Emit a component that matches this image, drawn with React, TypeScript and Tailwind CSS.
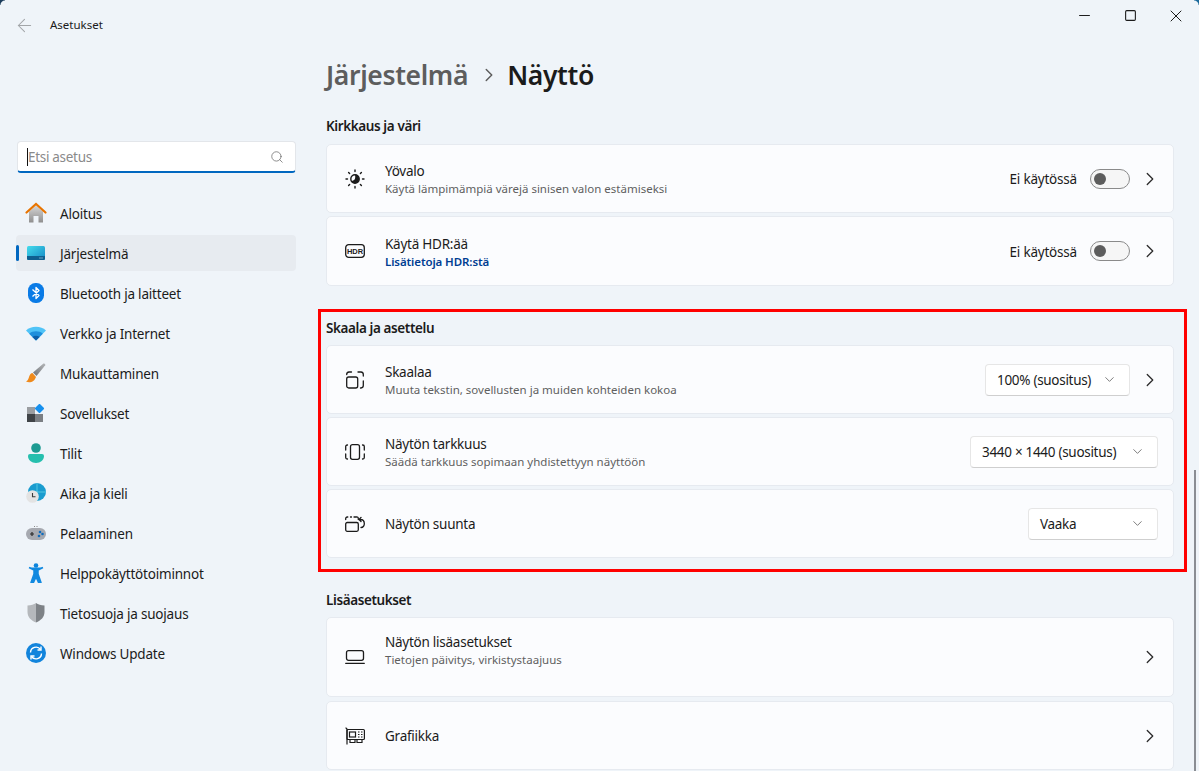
import React from 'react';
import { ArrowLeft, ChevronDown, ChevronRight, Minus, Search, Square, X } from 'lucide-react';

const FONT = "font-['Noto_Sans','Open_Sans',sans-serif]";

const HomeIcon = () => (
  <svg width="22" height="22" viewBox="0 0 22 22">
    <defs>
      <linearGradient id="homeWall" x1="0" y1="0" x2="0" y2="1">
        <stop offset="0" stopColor="#d6d6d6" />
        <stop offset="1" stopColor="#8f8f8f" />
      </linearGradient>
    </defs>
    <path d="M4 9.5 11 3.5l7 6V20.5H13.5V14h-5v6.500H4z" fill="url(#homeWall)" />
    <path d="M1.5 10.5 11 2l9.500 8.500" fill="none" stroke="#e87400" strokeWidth="2.2" strokeLinecap="round" />
  </svg>
);

const SystemIcon = () => (
  <svg width="20" height="16" viewBox="0 0 20 16">
    <defs>
      <linearGradient id="sysScreen" x1="0" y1="0" x2="1" y2="1">
        <stop offset="0" stopColor="#45dcec" />
        <stop offset="1" stopColor="#1487c4" />
      </linearGradient>
    </defs>
    <rect x="1" y="1" width="18" height="14" rx="1.5" fill="url(#sysScreen)" />
    <path d="M1 11h18v2.500a1.500 1.500 0 0 1-1.500 1.500h-15A1.500 1.500 0 0 1 1 13.500z" fill="#0f5f8f" />
    <rect x="13.5" y="12.5" width="1" height="1" fill="#bfe6f5" />
    <rect x="15.5" y="12.5" width="1" height="1" fill="#bfe6f5" />
  </svg>
);

const BluetoothIcon = () => (
  <svg width="16" height="20" viewBox="0 0 16 20">
    <rect x="0" y="0" width="16" height="20" rx="7.5" fill="#0a7be6" />
    <path d="M4.5 6.5 11 12.500 8 15.500V4.500l3 3L4.500 13.500" fill="none" stroke="#fff" strokeWidth="1.3" strokeLinejoin="round" />
  </svg>
);

const WifiIcon = () => (
  <svg width="20" height="16" viewBox="0 0 20 16">
    <path d="M0 5.5C5 .5 15 .5 20 5.500L10 15.500z" fill="#4fc3f7" />
    <path d="M3.2 8.7c3.600-3.200 10-3.200 13.600 0L10 15.500z" fill="#1e8fdc" />
    <path d="M6.4 11.900c2-1.500 5.200-1.500 7.200 0L10 15.500z" fill="#0d5ea8" />
  </svg>
);

const BrushIcon = () => (
  <svg width="20" height="20" viewBox="0 0 20 20">
    <defs>
      <linearGradient id="brushHandle" x1="0" y1="1" x2="1" y2="0">
        <stop offset="0" stopColor="#6f7378" />
        <stop offset="1" stopColor="#b4b6b9" />
      </linearGradient>
    </defs>
    <path d="M7 9.5 17.500.5c1.200-.3 2 .5 1.700 1.700L10.500 13z" fill="url(#brushHandle)" />
    <path d="M6.5 10c-3 .5-3 3.500-4 5.500-.5 1.500-1.500 2.500-2.500 3 3 1.500 8 1.200 10-4.500z" fill="#ef8a1c" />
  </svg>
);

const AppsIcon = () => (
  <svg width="20" height="18" viewBox="0 0 20 18">
    <rect x="1" y="3" width="8" height="7" fill="#9a9da1" />
    <rect x="1" y="10" width="8" height="8" fill="#3f4347" />
    <rect x="9" y="10" width="8" height="8" fill="#7b7f84" />
    <rect x="10" y="1" width="7" height="7" rx="1" transform="rotate(45 13.5 4.5)" fill="#1690ee" />
  </svg>
);

const UserIcon = () => (
  <svg width="16" height="20" viewBox="0 0 16 20">
    <circle cx="8" cy="5" r="4.8" fill="#1c9a92" />
    <path d="M0 13a2 2 0 0 1 2-2h12a2 2 0 0 1 2 2c0 4-3.500 7-8 7s-8-3-8-7z" fill="#25bfae" />
  </svg>
);

const TimeIcon = () => (
  <svg width="20" height="20" viewBox="0 0 20 20">
    <circle cx="11" cy="9" r="9" fill="#1a9ccf" />
    <path d="M11 0v18M2 9h18" stroke="#62d2e6" strokeWidth=".8" />
    <circle cx="6.5" cy="13.5" r="6.3" fill="#e3e3e3" />
    <path d="M6.5 10v3.700h3" fill="none" stroke="#3a3a3a" strokeWidth="1.1" />
  </svg>
);

const GamepadIcon = () => (
  <svg width="20" height="14" viewBox="0 0 20 14">
    <rect x="0" y="2" width="20" height="12" rx="6" fill="#a6a9b0" />
    <path d="M4 8h4M6 6v4" stroke="#2b2b2b" strokeWidth="1.2" />
    <circle cx="14" cy="6" r="1.3" fill="#0f6cbd" />
    <circle cx="13" cy="10" r="1.3" fill="#0f6cbd" />
    <circle cx="16.5" cy="8" r="1.3" fill="#0f6cbd" />
    <path d="M8 .5h1M10.500.5h1" stroke="#8a8a8a" strokeWidth="1" />
  </svg>
);

const AccessibilityIcon = () => (
  <svg width="16" height="20" viewBox="0 0 16 20">
    <circle cx="8" cy="2.5" r="2.3" fill="#0d84dc" />
    <path d="M1 4.500 6 7v4l-3 8.500h2.500L8 14l2.500 5.500H13L10 11V7l5-2.500" fill="#1189e0" stroke="#1189e0" strokeWidth="1.5" strokeLinejoin="round" />
  </svg>
);

const ShieldIcon = () => (
  <svg width="18" height="20" viewBox="0 0 18 20">
    <path d="M9 0c2 1.500 5 2.500 8.500 2.500V9c0 5-3.500 8.500-8.500 10.500z" fill="#7e8287" />
    <path d="M9 0C7 1.500 4 2.500.5 2.500V9c0 5 3.500 8.500 8.500 10.500z" fill="#b5b8bc" />
  </svg>
);

const UpdateIcon = () => (
  <svg width="20" height="20" viewBox="0 0 20 20">
    <circle cx="10" cy="10" r="10" fill="#1284dc" />
    <path d="M4.5 9.500A5.500 5.500 0 0 1 14.500 6.500M15.500 10.500A5.500 5.500 0 0 1 5.500 13.500" fill="none" stroke="#fff" strokeWidth="1.4" />
    <path d="M15 3.500v3.500h-3.500M5 16.500V13h3.500" fill="none" stroke="#fff" strokeWidth="1.4" />
  </svg>
);

const SunIcon = () => (
  <svg width="20" height="20" viewBox="0 0 20 20" fill="none" stroke="#1b1b1b" strokeWidth="1.4" strokeLinecap="round">
    <circle cx="10" cy="10" r="4.2" />
    <path d="M10 5.800a4.200 4.200 0 0 1 0 8.400c-2 0-3.500-1-4-2.500 3 .5 5-1.500 4-5.900z" fill="#1b1b1b" stroke="none" />
    <path d="M10 1v1.500M10 17.500V19M1 10h1.500M17.500 10H19M3.600 3.600l1 1M15.400 15.400l1 1M3.600 16.400l1-1M15.400 4.600l1-1" />
  </svg>
);

const HdrIcon = () => (
  <svg width="20" height="14" viewBox="0 0 20 14">
    <rect x=".7" y=".7" width="18.6" height="12.600" rx="3" fill="none" stroke="#1b1b1b" strokeWidth="1.3" />
    <text x="10" y="9.8" textAnchor="middle" fontSize="7.5" fontWeight="700" fontFamily="'Liberation Sans', sans-serif" fill="#1b1b1b">HDR</text>
  </svg>
);

const ScaleIcon = () => (
  <svg width="18" height="18" viewBox="0 0 18 18" fill="none" stroke="#1b1b1b" strokeWidth="1.3" strokeLinecap="round">
    <rect x=".7" y="6" width="11" height="11" rx="2" />
    <path d="M.7 3.500A2.500 2.500 0 0 1 3 1h2.500M12 1h3a2.500 2.500 0 0 1 2.300 2.500V5M17.300 10v4.500a2.500 2.500 0 0 1-2.300 2.500h-.5" />
  </svg>
);

const ResolutionIcon = () => (
  <svg width="20" height="16" viewBox="0 0 20 16" fill="none" stroke="#1b1b1b" strokeWidth="1.3" strokeLinecap="round">
    <rect x="5.5" y=".7" width="9" height="14.600" rx="2" />
    <path d="M2.500 1H2.200A1.500 1.500 0 0 0 .7 2.500V6M.7 10v3.500A1.500 1.500 0 0 0 2.200 15h.3M17.500 1h.3a1.500 1.500 0 0 1 1.500 1.500V6M19.300 10v3.500a1.500 1.500 0 0 1-1.500 1.500h-.3" />
  </svg>
);

const OrientationIcon = () => (
  <svg width="20" height="16" viewBox="0 0 20 16" fill="none" stroke="#1b1b1b" strokeWidth="1.3" strokeLinecap="round">
    <rect x=".7" y="6.500" width="12.600" height="8.800" rx="1.5" />
    <path d="M.7 3.500V2.500A1.500 1.500 0 0 1 2.200 1h.6M5.500 1h1M9 1h2.500A1.500 1.500 0 0 1 13.300 2.500V3.500" />
    <path d="M14 3.500h1.500c5 0 5 8 .5 8M16 1.500l-2 2 2 2" />
  </svg>
);

const LaptopIcon = () => (
  <svg width="20" height="14" viewBox="0 0 20 14" fill="none" stroke="#1b1b1b" strokeWidth="1.3" strokeLinecap="round">
    <rect x="1.5" y=".7" width="17" height="9.600" rx="2" />
    <path d="M.7 13.300h18.600" />
  </svg>
);

const GpuIcon = () => (
  <svg width="20" height="18" viewBox="0 0 20 18" fill="none" stroke="#1b1b1b" strokeWidth="1.2">
    <path d="M.6.6 2 2v15.500" />
    <rect x="2" y="2.500" width="17.400" height="10" rx="1" />
    <rect x="4.500" y="5" width="6" height="5" />
    <path d="M13 5h1.500M16 5h1.500M13 7.500h1.500M16 7.500h1.500M13 10h1.500M16 10h1.500M5 12.500v3h5v-3M12 12.500v3h5v-3" />
  </svg>
);

const NAV_ITEMS = [
  { label: 'Aloitus', icon: <HomeIcon /> },
  { label: 'Järjestelmä', icon: <SystemIcon />, active: true },
  { label: 'Bluetooth ja laitteet', icon: <BluetoothIcon /> },
  { label: 'Verkko ja Internet', icon: <WifiIcon /> },
  { label: 'Mukauttaminen', icon: <BrushIcon /> },
  { label: 'Sovellukset', icon: <AppsIcon /> },
  { label: 'Tilit', icon: <UserIcon /> },
  { label: 'Aika ja kieli', icon: <TimeIcon /> },
  { label: 'Pelaaminen', icon: <GamepadIcon /> },
  { label: 'Helppokäyttötoiminnot', icon: <AccessibilityIcon /> },
  { label: 'Tietosuoja ja suojaus', icon: <ShieldIcon /> },
  { label: 'Windows Update', icon: <UpdateIcon /> },
];

const Toggle = () => (
  <div className="flex items-center gap-[13px]">
    <span className="pt-[2px] text-[13.5px] text-[#1b1b1b] tracking-[-0.2px]">Ei käytössä</span>
    <div className="w-10 h-5 rounded-full border border-[#8a8a8a] bg-[#f6f6f6] flex items-center pl-[3px]">
      <div className="w-3 h-3 rounded-full bg-[#5d5d5d]" />
    </div>
  </div>
);

const Select = ({ label, width }: { label: string; width: string }) => (
  <div className={`${width} h-8 rounded-[4px] border border-[#e6e6e6] border-b-[#cfcfcf] bg-white flex items-center justify-between pl-[11px] pr-3 text-[13.5px] text-[#1b1b1b] tracking-[-0.3px]`}>
    <span className="pt-[2px]">{label}</span>
    <ChevronDown size={15} className="text-[#5f5f5f]" strokeWidth={1.3} />
  </div>
);

const Arrow = () => <ChevronRight size={22} className="-mx-[3px] text-[#2b2b2b]" strokeWidth={1.4} />;

const Card = ({ icon, title, subtitle, link, height, textClass = '', children }: {
  icon: React.ReactNode;
  title: string;
  subtitle?: string;
  link?: string;
  height: string;
  textClass?: string;
  children: React.ReactNode;
}) => (
  <div className={`${height} rounded-[5px] border border-[#e6eaf0] bg-[#fbfcfe] flex items-center pl-[18px] pr-[15px]`}>
    <div className="w-5 flex justify-center shrink-0">{icon}</div>
    <div className={`ml-5 flex-1 min-w-0 leading-none ${subtitle || link ? 'pt-[2px]' : ''} ${textClass}`}>
      <div className="text-[13.5px] leading-[18px] text-[#1b1b1b] tracking-[-0.25px]">{title}</div>
      {subtitle && <div className="mt-px text-[11.5px] leading-[16px] text-[#5f5f5f]">{subtitle}</div>}
      {link && <div className="mt-px text-[11.5px] leading-[16px] font-semibold text-[#003e92] tracking-[-0.1px]">{link}</div>}
    </div>
    <div className="flex items-center gap-3">{children}</div>
  </div>
);

const SectionTitle = ({ children, className }: { children: React.ReactNode; className: string }) => (
  <h2 className={`text-[13.5px] leading-[18px] font-semibold text-[#1b1b1b] tracking-[-0.4px] ${className}`}>{children}</h2>
);

export default function App() {
  return (
    <div className={`${FONT} relative w-[1199px] h-[771px] overflow-hidden bg-[#eff4f9] flex`}>
      {/* Sidebar */}
      <aside className="w-[312px] shrink-0 pl-4">
        <div className="h-[50px] flex items-center">
          <ArrowLeft size={21} className="-ml-[2px] text-[#a3a6a9]" strokeWidth={1.2} />
          <span className="ml-[15px] text-[11.5px] text-[#1b1b1b]">Asetukset</span>
        </div>
        <div className="mt-[91px] ml-px w-[279px] h-8 rounded-[4px] border border-[#e3e6ea] border-b-2 border-b-[#0067c0] bg-white flex items-center pl-[9px] pr-[11px]">
          <span className="w-px h-[18px] bg-[#111]" />
          <span className="flex-1 pt-[2px] text-[13.5px] text-[#8a8a8a] tracking-[-0.3px]">Etsi asetus</span>
          <Search size={14} className="text-[#6b6b6b]" strokeWidth={1.3} />
        </div>
        <nav className="mt-[22px] w-[280px] flex flex-col gap-1">
          {NAV_ITEMS.map((item) => (
            <div
              key={item.label}
              className={`relative h-9 rounded-[4px] flex items-center pl-2 ${item.active ? 'bg-[#e7ebf0]' : ''}`}
            >
              {item.active && <div className="absolute left-0 top-[10px] w-[3px] h-4 rounded-full bg-[#0067c0]" />}
              <div className="w-6 flex justify-center">{item.icon}</div>
              <span className="ml-3 pt-[2px] text-[13.5px] text-[#1b1b1b] tracking-[-0.2px]">{item.label}</span>
            </div>
          ))}
        </nav>
      </aside>

      {/* Content */}
      <main className="flex-1 min-w-0 pl-[14px] pr-[25px]">
        <div className="h-[117px] pt-[52px] flex items-start">
          <h1 className="flex items-center text-[26.5px] leading-[46px] font-semibold tracking-[-0.35px]">
            <span className="text-[#5d5d5d]">Järjestelmä</span>
            <ChevronRight size={22} className="ml-[10px] mr-[7px] text-[#5d5d5d]" strokeWidth={1.6} />
            <span className="text-[#1b1b1b]">Näyttö</span>
          </h1>
        </div>

        <SectionTitle className="h-[27px]">Kirkkaus ja väri</SectionTitle>
        <div className="flex flex-col gap-[3px]">
          <Card icon={<SunIcon />} title="Yövalo" subtitle="Käytä lämpimämpiä värejä sinisen valon estämiseksi" height="h-[69px]">
            <Toggle />
            <Arrow />
          </Card>
          <Card icon={<HdrIcon />} title="Käytä HDR:ää" link="Lisätietoja HDR:stä" height="h-[70px]">
            <Toggle />
            <Arrow />
          </Card>
        </div>

        <SectionTitle className="mt-[33px] h-[26px]">Skaala ja asettelu</SectionTitle>
        <div className="flex flex-col gap-[3px]">
          <Card icon={<ScaleIcon />} title="Skaalaa" subtitle="Muuta tekstin, sovellusten ja muiden kohteiden kokoa" height="h-[69px]">
            <Select label="100% (suositus)" width="w-[145px]" />
            <Arrow />
          </Card>
          <Card icon={<ResolutionIcon />} title="Näytön tarkkuus" subtitle="Säädä tarkkuus sopimaan yhdistettyyn näyttöön" height="h-[69px]">
            <Select label="3440 × 1440 (suositus)" width="w-[188px]" />
          </Card>
          <Card icon={<OrientationIcon />} title="Näytön suunta" height="h-[69px]">
            <Select label="Vaaka" width="w-[130px]" />
          </Card>
        </div>

        <SectionTitle className="mt-[33px] h-[26px]">Lisäasetukset</SectionTitle>
        <div className="flex flex-col gap-1">
          <Card icon={<LaptopIcon />} title="Näytön lisäasetukset" subtitle="Tietojen päivitys, virkistystaajuus" height="h-[80px]" textClass="mb-4">
            <Arrow />
          </Card>
          <Card icon={<GpuIcon />} title="Grafiikka" height="h-[69px]">
            <Arrow />
          </Card>
        </div>
      </main>

      {/* Annotation frame drawn over the screenshot */}
      <div className="absolute left-[318px] top-[309px] w-[869px] h-[263px] border-[3px] border-[#ff0000] pointer-events-none" />

      {/* Scrollbar thumb */}
      <div className="absolute right-[3px] top-[470px] w-[2px] h-[301px] bg-[#8a8d93]" />

      {/* Window controls */}
      <div className="absolute top-0 right-0 h-[31px] flex items-center text-[#1b1b1b]">
        <div className="w-[46px] flex justify-center"><Minus size={17} strokeWidth={1.4} /></div>
        <div className="w-[46px] flex justify-center"><Square size={13} strokeWidth={2} /></div>
        <div className="w-[46px] flex justify-center"><X size={20} strokeWidth={1.2} /></div>
      </div>

      {/* Desktop showing through the rounded window corners */}
      <div className="absolute top-0 left-0 w-[5px] h-[5px] bg-[radial-gradient(circle_at_100%_100%,transparent_4px,#1c3d5c_5px)]" />
      <div className="absolute top-0 right-0 w-[5px] h-[5px] bg-[radial-gradient(circle_at_0_100%,transparent_4px,#1b6a9c_5px)]" />
    </div>
  );
}
